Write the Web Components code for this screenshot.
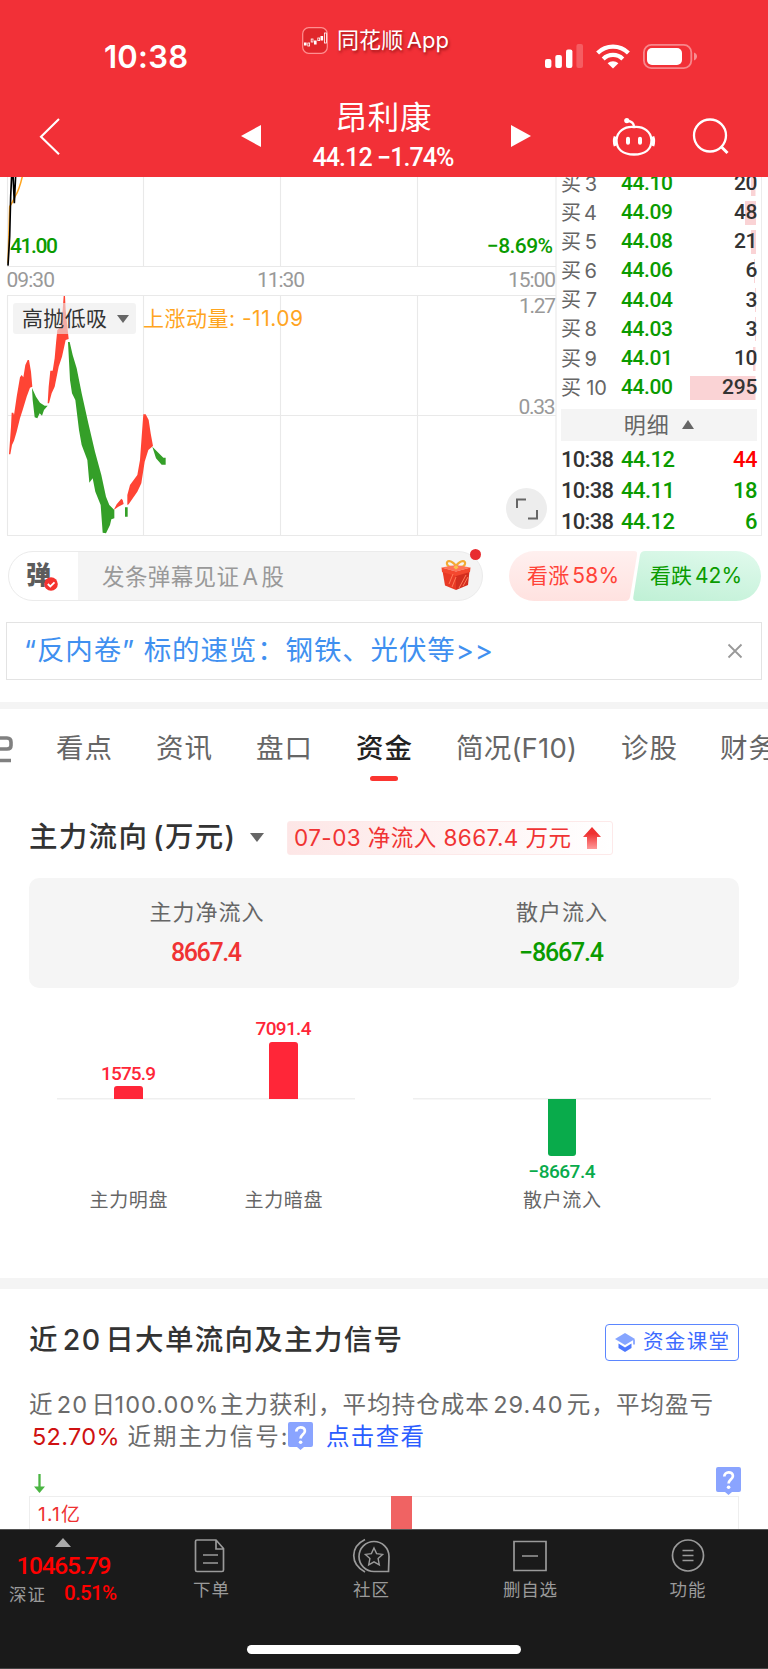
<!DOCTYPE html>
<html lang="zh-CN">
<head>
<meta charset="utf-8">
<title>昂利康 44.12</title>
<style>
  :root {
    --red: #f23037;
    --up: #f03333;
    --down: #0a9b00;
    --line: #ececec;
    --band: #f4f4f4;
    --muted: #666;
    --num: Roboto, "Noto Sans CJK SC", sans-serif;
  }
  body {
    margin: 0; width: 768px; height: 1669px; overflow: hidden;
    background: #fff; color: #333;
    font-family: Inter, "Noto Sans CJK SC", sans-serif;
    display: flex; flex-direction: column;
  }
</style>
</head>
<body>
<ths-header name="昂利康" price="44.12" change="−1.74%"></ths-header>
<ths-quote></ths-quote>
<ths-danmu></ths-danmu>
<ths-notice></ths-notice>
<ths-tabs></ths-tabs>
<ths-flow></ths-flow>
<ths-flow-bars></ths-flow-bars>
<ths-signal></ths-signal>
<ths-bottom-nav></ths-bottom-nav>

<script>
/**
 * Text run set to an exact width by spreading its letters.
 *
 * Usage:
 *   <fit-text w="92">昂利康</fit-text>
 */
class FitText extends HTMLElement {
  connectedCallback() {
    if (this.shadowRoot) return;
    this.attachShadow({ mode: 'open' });
    this.shadowRoot.innerHTML = `
      <style>
        :host { display: block; white-space: nowrap; line-height: 1.2; flex-shrink: 0; }
        span { display: inline-block; }
      </style>
      <span><slot></slot></span>`;
    const w = parseFloat(this.getAttribute('w'));
    const span = this.shadowRoot.querySelector('span');
    const n = Array.from(this.textContent).length;
    if (!w || n < 2) return;
    const gap = (w - span.getBoundingClientRect().width) / (n - 1);
    span.style.letterSpacing = gap.toFixed(3) + 'px';
    span.style.marginRight = (-gap).toFixed(3) + 'px';
  }
}
customElements.define('fit-text', FitText);

/* Base: opens the shadow root and renders view() once. */
class ThsElement extends HTMLElement {
  connectedCallback() {
    if (this.shadowRoot) return;
    this.attachShadow({ mode: 'open' });
    this.shadowRoot.innerHTML = `
      <style>
        :host { display: block; flex-shrink: 0; box-sizing: border-box; }
        * { box-sizing: border-box; }
        svg { display: block; overflow: visible; flex-shrink: 0; }
        .n { margin: 0 .14em; }
      </style>` + this.view();
  }
}

class ThsHeader extends ThsElement {
  view() {
    return `
      <style>
        :host { height: 177px; background: var(--red); color: #fff; }
        .status { height: 92px; display: grid; grid-template-columns: 302px 1fr 223px; }
        .time { padding: 38px 0 0 104px; font-size: 31px; font-weight: 600; }
        .app { display: flex; gap: 9px; padding-top: 27px; height: 54px; align-items: center;
          font-size: 22px; text-shadow: 1px 2px 3px rgba(90,0,0,.6); }
        .signals { display: flex; gap: 13px; padding-top: 44px; }
        .nav { height: 85px; display: grid; grid-template-columns: 241px 20px 250px 20px 82px 42px 38px 35px; }
        .nav > svg { margin-top: 26px; }
        .nav > svg.tri { margin-top: 33px; }
        .title { display: flex; flex-direction: column; align-items: center; padding-right: 5px; }
        .name { font-size: 31.5px; margin-top: 7px; height: 44px; }
        .price { font: 500 25px var(--num); }
      </style>
      <div class="status">
        <div class="time"><fit-text w="84">10:38</fit-text></div>
        <div class="app">
          <svg width="26" height="27" viewBox="0 0 26 27">
            <rect x=".7" y=".7" width="24.6" height="25.6" rx="6" fill="#e0262b" stroke="#ff8f90" stroke-width="1.2"/>
            <g fill="#fff"><rect x="2" y="15.5" width="2.6" height="3"/><rect x="12" y="13.5" width="2.6" height="4"/><rect x="18.5" y="9" width="2.6" height="4.5"/></g>
            <g fill="none" stroke="#fff" stroke-width=".8"><rect x="5.8" y="16" width="1.8" height="3"/><rect x="9.2" y="12" width="1.8" height="3"/><rect x="15.8" y="11" width="1.8" height="2.6"/><rect x="22.4" y="6" width="2" height="10"/></g>
          </svg>
          <fit-text w="112">同花顺<span style="margin-left:.16em">App</span></fit-text>
        </div>
        <div class="signals">
          <svg width="38" height="25" viewBox="0 0 38 25" fill="#fff">
            <rect x="0" y="15" width="6.4" height="9" rx="2"/><rect x="10.3" y="11" width="6.6" height="13" rx="2"/>
            <rect x="21" y="5.5" width="6.4" height="18.5" rx="2"/><rect x="31.4" y="0" width="6.6" height="24" rx="2" opacity=".22"/>
          </svg>
          <svg width="34" height="25" viewBox="0 0 34 25">
            <g fill="none" stroke="#fff" stroke-width="4.2"><path d="M1.6 8.9a22 22 0 0 1 30.8 0"/><path d="M7.2 14.9a14 14 0 0 1 19.6 0"/></g>
            <path d="M11.6 19.3a8 8 0 0 1 10.8 0L17 24.4z" fill="#fff"/>
          </svg>
          <svg width="55" height="25" viewBox="0 0 55 25">
            <rect x=".9" y=".9" width="47.4" height="23.2" rx="7.5" fill="none" stroke="#fff" stroke-opacity=".42" stroke-width="1.8"/>
            <rect x="4" y="4" width="35" height="17" rx="5" fill="#fff"/>
            <path d="M51 8.6c4 1.3 4 6.5 0 7.8z" fill="#fff" opacity=".45"/>
          </svg>
        </div>
      </div>
      <div class="nav">
        <svg width="60" height="38" viewBox="0 0 60 38"><path d="M59 1 41 18.7 59 36.3" fill="none" stroke="#fff" stroke-width="2.1"/></svg>
        <svg class="tri" width="20" height="22"><path d="M0 11 20 0v22z" fill="#fff"/></svg>
        <div class="title">
          <div class="name"><fit-text w="96">${this.getAttribute('name')}</fit-text></div>
          <div class="price"><fit-text w="142">${this.getAttribute('price')} ${this.getAttribute('change')}</fit-text></div>
        </div>
        <svg class="tri" width="20" height="22"><path d="M20 11 0 0v22z" fill="#fff"/></svg>
        <i></i>
        <svg width="42" height="39" viewBox="0 0 42 39" fill="none" stroke="#fff" stroke-width="2.3">
          <path d="M21 9C11 8 4 14 3.5 22c0 9 6 14.5 17.5 14.5S38.5 31 38.5 22C38 14 31 8 21 9z"/>
          <path d="M21 9C21 5 18.5 3 14 2.8"/><circle cx="13.8" cy="2.6" r="2.6" fill="#fff" stroke="none"/>
          <path d="M2.2 18.5Q.5 23 2.2 28M39.8 18.5Q41.5 23 39.8 28" stroke-width="3"/>
          <path d="M15 20.7v4M27 20.7v4" stroke-width="4" stroke-linecap="round"/>
        </svg>
        <i></i>
        <svg width="36" height="37" viewBox="0 0 36 37" fill="none" stroke="#fff" stroke-width="2.3"><circle cx="17" cy="17.5" r="16"/><path d="m28 28.5 6.5 6.5" stroke-width="3"/></svg>
      </div>`;
  }
}
customElements.define('ths-header', ThsHeader);

/* Bid levels with the latest trades below them. */
class ThsOrderBook extends ThsElement {
  view() {
    const bids = [
      [3, '44.10', 20, 4.5], [4, '44.09', 48, 11], [5, '44.08', 21, 5], [6, '44.06', 6, 1.4],
      [7, '44.04', 3, 1], [8, '44.03', 3, 1], [9, '44.01', 10, 2.5], [10, '44.00', 295, 65.5],
    ];
    const trades = [['44.12', 44, '#f00'], ['44.11', 18, 'var(--down)'], ['44.12', 6, 'var(--down)']];
    return `
      <style>
        :host { width: 205.5px; height: 358.5px; overflow: hidden; padding: 0 3px 0 5px;
          border-right: 1px solid var(--line); border-bottom: 1px solid var(--line); font: 500 21px var(--num); }
        .bids { margin-top: -8px; }
        .row { height: 29.17px; display: grid; grid-template-columns: 60px 1fr auto; align-items: center; }
        .lv { color: var(--muted); font: 400 20px Inter, "Noto Sans CJK SC", sans-serif; }
        .px { color: var(--down); }
        .vol { height: 24px; display: flex; align-items: center; justify-content: flex-end; width: 70px;
          background: linear-gradient(#fad3d5, #fad3d5) no-repeat right 2px top 0 / var(--bar) 100%; }
        .more { margin: 6.5px 1px 0 0; height: 32px; background: var(--band); display: flex; justify-content: center;
          align-items: center; gap: 13px; color: var(--muted); font: 400 22px "Noto Sans CJK SC"; }
        .more fit-text { margin-top: -4px; }
        .trades { margin-top: 4.5px; font-size: 22px; }
        .trades .row { height: 30.6px; }
      </style>
      <div class="bids">
        ${bids.map(([lv, px, vol, bar]) => `
          <div class="row"><span class="lv"><fit-text w="${lv > 9 ? 46 : 36}">买 ${lv}</fit-text></span>
            <span class="px"><fit-text w="52">${px}</fit-text></span>
            <span class="vol" style="--bar:${bar}px"><fit-text w="${String(vol).length * 11.8}">${vol}</fit-text></span></div>`).join('')}
      </div>
      <div class="more"><fit-text w="45">明细</fit-text><svg width="12" height="9"><path d="M6 0l6 9H0z" fill="#666"/></svg></div>
      <div class="trades">
        ${trades.map(([px, vol, color]) => `
          <div class="row"><fit-text w="53">10:38</fit-text><span class="px"><fit-text w="54">${px}</fit-text></span>
            <span style="color:${color}"><fit-text w="${String(vol).length * 12.3}">${vol}</fit-text></span></div>`).join('')}
      </div>`;
  }
}
customElements.define('ths-order-book', ThsOrderBook);

/* Intraday chart, indicator pane and order book side by side. */
class ThsQuote extends ThsElement {
  view() {
    return `
      <style>
        :host { height: 359px; display: flex; position: relative; }
        text { font: 500 21px var(--num); }
        .axis text { fill: #999; font-weight: 400; }
        .pick { position: absolute; left: 13px; top: 126px; width: 123px; height: 31px; border-radius: 3px;
          background: rgba(236,236,236,.62); display: flex; align-items: center; padding-left: 9px; gap: 10px; font-size: 21px; }
        .mom { position: absolute; left: 143px; top: 129px; font-size: 21px; color: #ffa51f; }
        .full { position: absolute; left: 505.5px; top: 310.5px; }
      </style>
      <svg width="556" height="359" viewBox="0 177 556 359">
        <path d="M7.5 177V266.5M7.5 295.5v240M143.5 177v89.5M280.5 177v89.5M417.5 177v89.5M143.5 295.5v240M280.5 295.5v240M417.5 295.5v240M556 177v359M7 266.5h549M7 295.5h549M7 415.5h549M7 535.5h549" stroke="#e9e9e9" stroke-width="1.1" fill="none"/>
        <clipPath id="c"><rect x="0" y="177" width="556" height="359"/></clipPath>
        <g clip-path="url(#c)"><g transform="translate(0 170) scale(.33333)">
          <g fill="none" stroke-width="4.5">
            <path d="M24 280 29 110 38 95 45 80Q58 60 68 15" stroke="#ffa51f"/>
            <path d="M24 287 29 200 32 80 35 15M39 15 43 100 47 15" stroke="#000" stroke-width="5"/>
          </g>
          <g fill="#ff4434">
            <path d="M27 853 33 770 35 728H40L42 735 50 680 60 622 65 615 70 622 76 585 83 570H87L93 605 97 650 90 653 80 680 68 720 60 745 50 785 42 812 36 825 31 853z"/>
            <path d="M143 700 146 650 151 602H158L164 565 168 520 172 480 182 470 188 420 191 378H195L197 420 201 460 206 507 197 510 186 560 176 590 164 650 155 670 147 700z"/>
            <path d="M341 1020 350 1003 364 986 368 990 371 1002 355 1010z"/>
            <path d="M382 1005V975L390 945 412 915 420 870 425 800 430 733H437L446 750 452 790 459 828 445 840 434 875 424 940 412 965 386 1003z"/>
          </g>
          <g fill="#349f28">
            <path d="M96 654 108 680 120 698 134 707H143L132 720 126 737 119 730 112 745 104 742 98 690z"/>
            <path d="M204 516H209L218 555 230 595 245 670 265 760 285 845 304 915 318 980 328 1005 343 1020V1045L334 1048 330 1065 318 1090 308 1088 302 1005 286 965 278 925 268 938 262 870 245 825 237 780 226 690 216 670 210 630z"/>
            <path d="M375 1012h8v28h-8zM457 830 475 848 490 863H497V884H485L468 865z"/>
          </g>
        </g></g>
        <text x="10" y="253" fill="#0a9b00" textLength="48">41.00</text>
        <text x="487" y="253" fill="#0a9b00" textLength="66">−8.69%</text>
        <g class="axis">
          <text x="6.5" y="287" textLength="48.5">09:30</text><text x="257" y="287" textLength="48">11:30</text>
          <text x="508" y="287" textLength="48">15:00</text><text x="519" y="313" textLength="37">1.27</text>
          <text x="518.5" y="414" textLength="37">0.33</text>
        </g>
      </svg>
      <ths-order-book></ths-order-book>
      <div class="pick"><fit-text w="85">高抛低吸</fit-text><svg width="12" height="8"><path d="M0 0h12L6 8z" fill="#666"/></svg></div>
      <div class="mom"><fit-text w="160">上涨动量: -11.09</fit-text></div>
      <svg class="full" width="41" height="41" fill="none" stroke="#666" stroke-width="2"><circle cx="20.5" cy="20.5" r="20.5" fill="#ededed" stroke="none"/><path d="M11 20v-8.5h9M31 22v8.5h-9"/></svg>`;
  }
}
customElements.define('ths-quote', ThsQuote);

class ThsDanmu extends ThsElement {
  view() {
    return `
      <style>
        :host { height: 86px; padding: 15px 7px 0 8px; display: flex; justify-content: space-between; }
        .input { width: 475px; height: 50px; border: 1.5px solid #ebebeb; border-radius: 25px; display: flex;
          align-items: center; position: relative; color: #999; font-size: 22.5px;
          background: linear-gradient(90deg, #fff 69px, var(--band) 69px); padding-left: 17px; }
        .logo { font-size: 25px; font-weight: 900; color: #5c5c5c; width: 76px; position: relative; top: -3px; }
        .tick { position: absolute; left: 34.5px; top: 24.5px; }
        .gift { position: absolute; left: 432px; top: 7px; }
        .dot { position: absolute; left: 461px; top: -3px; width: 11px; height: 11px; border-radius: 50%; background: #e82c30; }
        .vote { display: flex; width: 252px; height: 50px; font-size: 21px; }
        .vote div { display: flex; align-items: center; }
        .up { width: 128px; padding-left: 18px; color: #ff4338; background: linear-gradient(#fff0ef, #ffe2e0);
          clip-path: path('M25 0H125Q129 0 128 4L121 46Q120 50 116 50H25A25 25 0 0 1 25 0Z'); }
        .down { width: 128px; margin-left: -4px; padding-left: 17px; color: var(--down); background: linear-gradient(190deg, #e1faed, #bff0d5);
          clip-path: path('M12 0H103A25 25 0 0 1 103 50H4Q-.5 50 .3 46L7 4Q8 0 12 0Z'); }
      </style>
      <div class="input">
        <div class="logo">弹</div>
        <svg class="tick" width="14" height="14"><circle cx="7" cy="7" r="6.8" fill="#f5332e"/><path d="m3.8 7 2.5 2.5 4.2-4.2" fill="none" stroke="#fff" stroke-width="1.8"/></svg>
        <fit-text w="182">发条弹幕见证<span class="n">A</span>股</fit-text>
        <svg class="gift" width="30" height="32" viewBox="0 0 30 32">
          <g fill="none" stroke="#f3aa33" stroke-width="2.2"><path d="M15 7C10 0 5 1.5 6 5s6 3.5 9 2.5M15 7C20 0 25 1.5 24 5s-6 3.5-9 2.5"/></g>
          <path d="M1.5 12 15 16v15L4 26.5z" fill="#e93a25"/><path d="M15 16 28.5 12 27 26 15 31z" fill="#d32e1f"/>
          <path d="M.5 8.5 15 6l14.5 2.5L15 12.5z" fill="#ff7458"/><path d="M.5 8.5 15 12.5V17L1 13zM29.5 8.5 15 12.5V17L29 13z" fill="#f4482f"/>
          <path d="M8 25l4-10M11 28l4-10M18 29l7-13M22 27l5-9" stroke="#ff7a58" stroke-width="1"/>
          <path d="M12.5 8.5Q15 4 17.5 8.5L15 10.5z" fill="#f9c04b"/>
        </svg>
        <i class="dot"></i>
      </div>
      <div class="vote">
        <div class="up"><fit-text w="95">看涨<span class="n">58%</span></fit-text></div>
        <div class="down"><fit-text w="95">看跌<span class="n">42%</span></fit-text></div>
      </div>`;
  }
}
customElements.define('ths-danmu', ThsDanmu);

class ThsNotice extends ThsElement {
  view() {
    return `
      <style>
        :host { height: 57.5px; margin: 0 6px 22px; border: 1.5px solid #e3e3e3; padding: 0 19px 0 17px;
          display: flex; align-items: center; justify-content: space-between; color: #4090f0; font-size: 27.5px; }
      </style>
      <fit-text w="469">“反内卷” 标的速览：钢铁、光伏等&gt;&gt;</fit-text>
      <svg width="14" height="14"><path d="M.5.5l13 13M13.5.5l-13 13" stroke="#999" stroke-width="1.8"/></svg>`;
  }
}
customElements.define('ths-notice', ThsNotice);

class ThsTabs extends ThsElement {
  view() {
    const tabs = [['看点', 56, 44], ['资讯', 56, 44], ['盘口', 56, 44], ['资金', 56, 44], ['简况(F10)', 121, 44], ['诊股', 56, 43], ['财务', 56, 0]];
    return `
      <style>
        :host { height: 99px; border-top: 7.5px solid var(--band); overflow: hidden; }
        .bar { display: flex; width: 790px; padding-top: 23px; color: var(--muted); font-size: 27.5px; }
        .tab { display: flex; flex-direction: column; align-items: center; }
        .on { color: #222; font-weight: 500; }
        .on::after { content: ''; width: 28px; height: 5.5px; border-radius: 3px; background: #fb3530; margin-top: 11px; }
        .cut { width: 56px; margin-top: 3px; }
      </style>
      <div class="bar">
        <svg class="cut" width="56" height="27" fill="none" stroke="#808080" stroke-width="3.6"><path d="M0 3H7Q11 3 11 7v3.5Q11 14 7 14H0M0 25.5H11"/></svg>
        ${tabs.map(([t, w, gap]) => `<div class="tab${t === '资金' ? ' on' : ''}" style="margin-right:${gap}px"><fit-text w="${w}">${t}</fit-text></div>`).join('')}
      </div>`;
  }
}
customElements.define('ths-tabs', ThsTabs);

class ThsFlow extends ThsElement {
  view() {
    return `
      <style>
        :host { height: 187px; padding: 20px 29px 0; }
        .head { display: flex; height: 34px; align-items: center; }
        .title { font-size: 28.5px; font-weight: 500; word-spacing: -4px; }
        .caret { margin: 0 23px 0 15px; }
        .tag { width: 326px; height: 34px; display: flex; align-items: center; justify-content: space-between; padding: 0 11px 0 6px;
          border: 1px solid #fde9e9; border-radius: 3px; background: linear-gradient(90deg, #fde6e6, #fff); color: var(--up); font-size: 22.5px; }
        .card { margin-top: 23px; height: 110px; border-radius: 10px; background: #f5f5f5; display: grid; grid-template-columns: 1fr 1fr; }
        .cell { display: flex; flex-direction: column; align-items: center; padding-top: 21px; gap: 15px; font-size: 22px; color: var(--muted); }
        b { font: 500 25px var(--num); margin-top: -1.5px; }
      </style>
      <div class="head">
        <div class="title"><fit-text w="206">主力流向 (万元)</fit-text></div>
        <svg class="caret" width="14" height="9"><path d="M0 0h14L7 9z" fill="#666"/></svg>
        <div class="tag"><fit-text w="277">07-03 净流入 8667.4 万元</fit-text>
          <svg width="18" height="22"><linearGradient id="g" x2="0" y2="1"><stop offset=".3" stop-color="#ee3131"/><stop offset="1" stop-color="#f99"/></linearGradient><path d="M9 0l9 10h-4v12H4V10H0z" fill="url(#g)"/></svg>
        </div>
      </div>
      <div class="card">
        <div class="cell"><fit-text w="114">主力净流入</fit-text><b style="color:var(--up)"><fit-text w="71">8667.4</fit-text></b></div>
        <div class="cell"><fit-text w="91">散户流入</fit-text><b style="color:var(--down)"><fit-text w="85">−8667.4</fit-text></b></div>
      </div>`;
  }
}
customElements.define('ths-flow', ThsFlow);

class ThsFlowBars extends ThsElement {
  bar(value, label, h, w) {
    return `
      <div class="col ${h < 0 ? 'neg' : 'pos'}">
        <div class="plot"><span class="v"><fit-text w="${w}">${value}</fit-text></span><i style="height:${Math.abs(h)}px"></i></div>
        <fit-text w="78">${label}</fit-text>
      </div>`;
  }
  view() {
    return `
      <style>
        :host { height: 301.5px; border-bottom: 11.5px solid var(--band); padding: 0 57px; display: flex; justify-content: space-between; }
        .group { width: 298px; display: flex; justify-content: center; height: 240px;
          background: linear-gradient(#efefef, #efefef) no-repeat 0 110.5px / 100% 1.5px; }
        .col { width: 155px; display: flex; flex-direction: column; align-items: center; font-size: 19px; color: var(--muted); flex-shrink: 0; }
        .plot { display: flex; flex-direction: column; align-items: center; height: 111px; justify-content: flex-end; gap: .5px; margin-bottom: 91px; }
        .neg .plot { margin-top: 111.5px; margin-bottom: -20.5px; flex-direction: column-reverse; gap: 5px; }
        .v { font: 500 19px var(--num); color: #ff2638; }
        .neg .v { color: #09ab4b; }
        i { width: 28.5px; background: #ff2638; border-radius: 3px 3px 0 0; flex-shrink: 0; }
        .neg i { background: #09ab4b; border-radius: 0 0 3px 3px; }
      </style>
      <div class="group">${this.bar('1575.9', '主力明盘', 12.5, 55)}${this.bar('7091.4', '主力暗盘', 57, 56)}</div>
      <div class="group">${this.bar('−8667.4', '散户流入', -57, 67)}</div>`;
  }
}
customElements.define('ths-flow-bars', ThsFlowBars);

class ThsSignal extends ThsElement {
  view() {
    const help = `<svg class="help" width="25" height="28" viewBox="0 0 25 28"><path d="M2 0h21q2 0 2 2v21q0 2-2 2h-7l-3.5 3L9 25H2q-2 0-2-2V2q0-2 2-2z" fill="#8aa4ff"/><path d="M8.3 9.5c0-5.5 8.6-5.5 8.6-.5 0 3.5-4.3 3.7-4.3 7.5" fill="none" stroke="#fff" stroke-width="2.7"/><circle cx="12.6" cy="20.3" r="1.8" fill="#fff"/></svg>`;
    return `
      <style>
        :host { height: 239.5px; padding: 35px 29px 0; overflow: hidden; }
        .head { display: flex; justify-content: space-between; align-items: center; height: 37px; }
        h2 { margin: -4px 0 0; font-size: 28.5px; font-weight: 500; }
        .course { width: 134px; height: 37px; border: 1.5px solid #5b86ff; border-radius: 4px; display: flex; align-items: center;
          justify-content: space-between; padding: 0 9px; color: #3d6bff; font-size: 20.5px; }
        .desc { margin-top: 28px; font-size: 23.5px; color: #6b6b6b; }
        .line { height: 32px; display: flex; align-items: center; }
        .rate { margin: 0 .02em 0 -.06em; }
        .pct { color: #cf1111; margin: 0 8px 0 3px; }
        .help { position: relative; top: -1px; }
        .link { color: #2b5cff; margin-left: 13.5px; }
        .marks { display: flex; justify-content: space-between; align-items: flex-start; height: 43px; padding-top: 14px; margin-right: -2px; }
        .marks .help { top: 0; }
        .arrow { margin: 7px 0 0 5px; }
        .plot { height: 34px; border: 1px solid #eee; border-bottom: 0; display: flex; padding-left: 8px; color: #ee3131; font-size: 19px; }
        .plot i { width: 21.5px; background: #f06363; margin-left: 310.5px; margin-top: -1px; }
        .plot fit-text { margin-top: 7px; }
      </style>
      <div class="head">
        <h2><fit-text w="373">近<span class="n">20</span>日大单流向及主力信号</fit-text></h2>
        <div class="course">
          <svg width="20" height="19"><path d="M10 0 20 6 10 12 0 6z" fill="#86a5ff"/><path d="M3.5 10.5 10 14.5l6.5-4v4.5L10 19 3.5 15z" fill="#4e79ff"/><path d="M19 6.5v5" stroke="#6f92ff" stroke-width="1.5"/></svg>
          <fit-text w="86">资金课堂</fit-text>
        </div>
      </div>
      <div class="desc">
        <div class="line"><fit-text w="684">近<span class="n">20</span>日<span class="rate">100.00%</span>主力获利，平均持仓成本<span class="n">29.40</span>元，平均盈亏</fit-text></div>
        <div class="line"><span class="pct"><fit-text w="87.5">52.70%</fit-text></span><fit-text w="160">近期主力信号:</fit-text>${help}<span class="link"><fit-text w="98">点击查看</fit-text></span></div>
      </div>
      <div class="marks"><svg class="arrow" width="11" height="19"><path d="M5.5 0v15" stroke="#4bb543" stroke-width="2.3"/><path d="M0 12.5h11L5.5 19z" fill="#4bb543"/></svg>${help}</div>
      <div class="plot"><fit-text w="42">1.1亿</fit-text><i></i></div>`;
  }
}
customElements.define('ths-signal', ThsSignal);

class ThsBottomNav extends ThsElement {
  view() {
    const items = [
      ['下单', 36, 35, '<path d="M3 2h19l7.5 8.5V32q0 1.5-1.5 1.5H3Q1.5 33.5 1.5 32V3.5Q1.5 2 3 2zM22 2v9h7.5M9 17h15M9 25h15"/>'],
      ['社区', 36, 37, '<path d="M35.5 33.5H21A15 15 0 1 1 36 18.5zM12 1.5C-3 9-3 26 12 34"/><path d="m21 10 2.6 5.6 6 .8-4.5 4.2 1.2 6.2-5.3-3-5.3 3 1.2-6.2-4.5-4.2 6-.8z" stroke-width="1.4"/>'],
      ['删自选', 54, 36, '<path d="M2 3.5h32v29H2zM10 18h16"/>'],
      ['功能', 36, 34, '<circle cx="17" cy="17.5" r="15.5"/><path d="M11.5 12.5h11M11.5 17.5h11M11.5 22.5h11"/>'],
    ];
    return `
      <style>
        :host { height: 140px; background: #1a1a1a; color: #9a9a9a; font-size: 17.5px; border-bottom: 1px solid #444;
          display: flex; flex-direction: column; align-items: center; border-top: 1px solid #555; }
        .row { width: 768px; height: 115px; display: grid; grid-template-columns: 131px 160px 160px 158px 157px; }
        .index { color: #f00; font: 500 24.5px var(--num); }
        .index svg { margin: 8px 0 0 55px; }
        .index div { margin: 4px 0 0 16.5px; height: 31px; }
        .index p { margin: 0 0 0 9px; display: flex; align-items: center; gap: 19px; font-size: 20.5px; height: 24px; }
        .index small { color: #9a9a9a; font: 400 17.5px "Noto Sans CJK SC"; }
        .item { display: flex; flex-direction: column; align-items: center; padding-top: 8px; gap: 5px; }
        .home { width: 274px; height: 9px; border-radius: 5px; background: #fff; }
      </style>
      <div class="row">
        <div class="index"><svg width="16" height="9"><path d="M8 0l8 9H0z" fill="#aaa"/></svg>
          <div><fit-text w="95">10465.79</fit-text></div>
          <p><small><fit-text w="36">深证</fit-text></small><fit-text w="53">0.51%</fit-text></p></div>
        ${items.map(([t, w, iw, d]) => `<div class="item"><svg width="${iw}" height="36" fill="none" stroke="#9a9a9a" stroke-width="1.7">${d}</svg><fit-text w="${w}">${t}</fit-text></div>`).join('')}
      </div>
      <div class="home"></div>`;
  }
}
customElements.define('ths-bottom-nav', ThsBottomNav);
</script>
</body>
</html>
